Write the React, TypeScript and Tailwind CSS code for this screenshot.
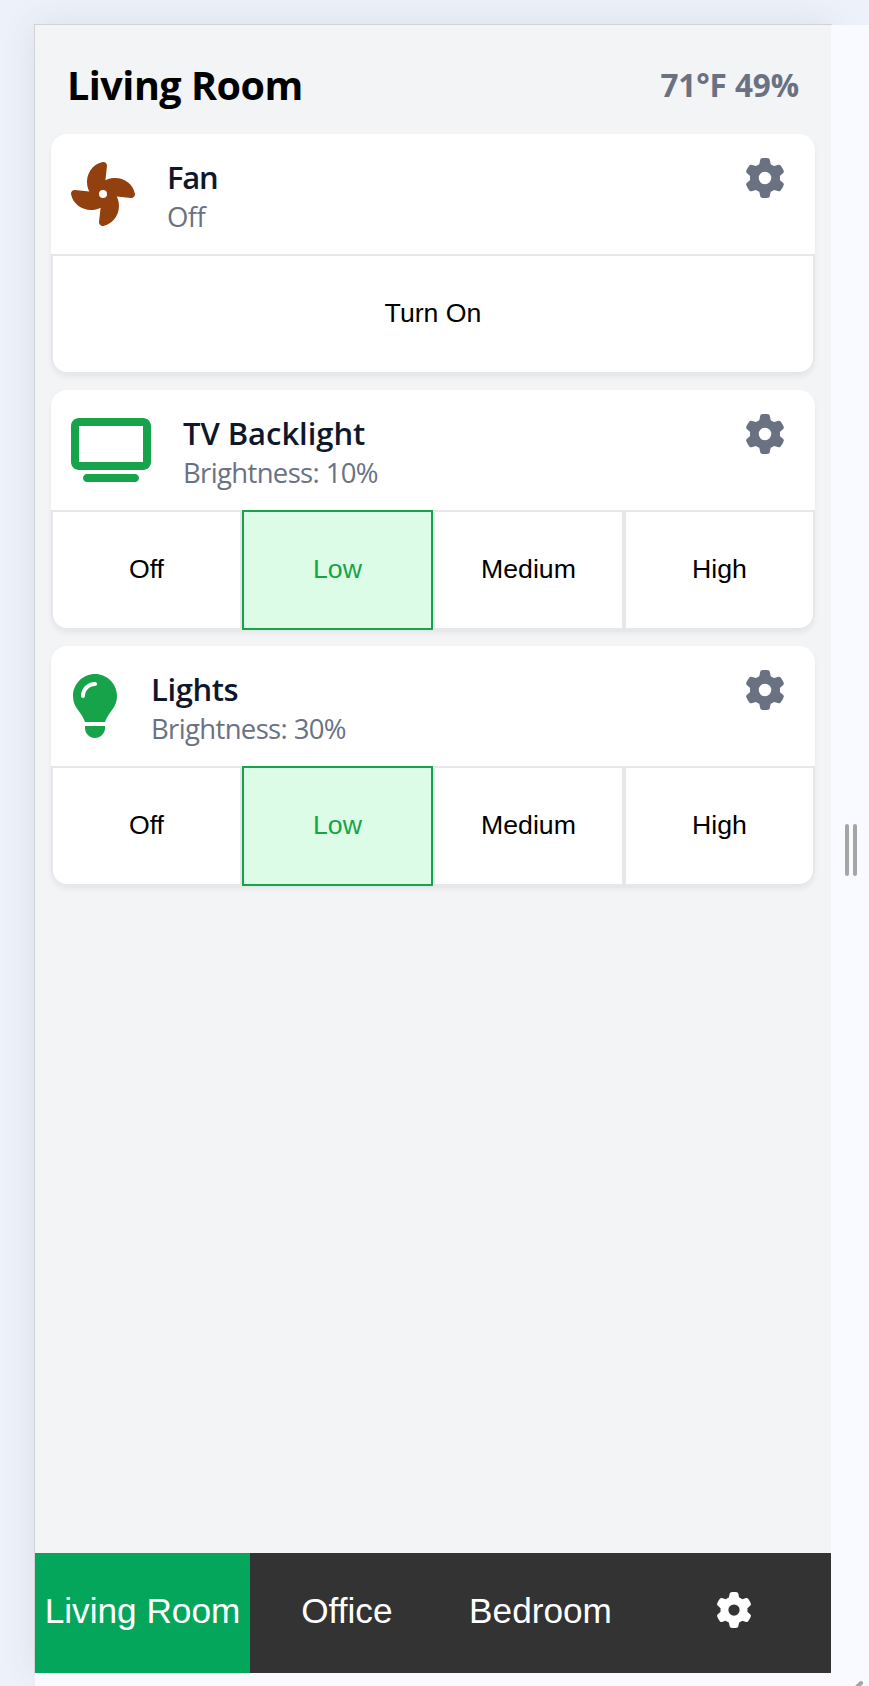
import type { ReactNode } from "react";
import { FaFan, FaGear, FaLightbulb, FaTv } from "react-icons/fa6";

type Option = { label: string; active?: boolean };

type DeviceProps = {
  icon: ReactNode;
  name: ReactNode;
  status: ReactNode;
  options: Option[];
};

function DeviceCard({ icon, name, status, options }: DeviceProps) {
  return (
    <section className="flex h-60 flex-col rounded-2xl bg-white shadow-[0_3px_6px_-1px_rgba(0,0,0,0.08)]">
      <div className="flex h-[120px] shrink-0 items-start pl-5 pr-[30px]">
        <div className="mt-7 shrink-0">{icon}</div>
        <div className="ml-8 mt-[23px] flex-1 whitespace-nowrap font-['Open_Sans',sans-serif]">
          <h2 className="h-10 text-[31px] font-semibold leading-10 text-slate-900">{name}</h2>
          <p className="h-10 text-[27.5px] leading-10 text-gray-500">{status}</p>
        </div>
        <button className="mt-6" aria-label="Settings">
          <FaGear className="size-10 text-gray-500" />
        </button>
      </div>
      <div className="flex h-[120px]">
        {options.map((option) => (
          <button
            key={option.label}
            className={
              option.active
                ? "flex-1 border-2 border-[#16a34a] bg-[#dcfce7] pb-0.5 text-[26.67px] text-[#16a34a]"
                : "flex-1 border-2 border-gray-200 pb-0.5 text-[26.67px] text-black first:rounded-bl-2xl last:rounded-br-2xl"
            }
          >
            {option.label}
          </button>
        ))}
      </div>
    </section>
  );
}

const levels: Option[] = [
  { label: "Off" },
  { label: "Low", active: true },
  { label: "Medium" },
  { label: "High" },
];

export default function App() {
  return (
    <div className="grid h-[1686px] w-[869px] overflow-hidden bg-[#edf2fa] pl-[34px] pt-6 font-['Liberation_Sans',Arial,sans-serif]">
      <div className="col-start-1 row-start-1 h-[1650px] w-[798px] border border-[#d0d2d5] shadow-[0_0_32px_rgba(60,64,67,0.1)]" />
      <div className="z-10 col-start-1 row-start-1 ml-px mt-px flex h-[1661px] bg-[#f9faff]">
        <main className="flex h-[1648px] w-[796px] shrink-0 flex-col bg-[#f3f4f6]">
          <header className="flex h-[109px] items-center justify-between whitespace-nowrap px-8 pt-2.5 font-['Open_Sans',sans-serif] font-bold">
            <h1 className="text-[39.5px] leading-[56px] tracking-[-0.5px] text-black">Living Room</h1>
            <span className="text-[31.5px] leading-[48px] tracking-[-0.1px] text-gray-500">71°F 49%</span>
          </header>
          <div className="flex flex-1 flex-col gap-4 px-4">
            <DeviceCard
              icon={<FaFan className="size-16 text-[#92400e]" />}
              name={<span className="tracking-[-1.2px]">Fan</span>}
              status={<span className="tracking-[-0.6px]">Off</span>}
              options={[{ label: "Turn On" }]}
            />
            <DeviceCard
              icon={<FaTv className="h-16 w-20 text-[#16a34a]" />}
              name={<span className="tracking-[-0.05px]">TV Backlight</span>}
              status={<span className="tracking-[-0.65px]">Brightness: 10%</span>}
              options={levels}
            />
            <DeviceCard
              icon={<FaLightbulb className="h-16 w-12 text-[#16a34a]" />}
              name={<span className="tracking-[-0.4px]">Lights</span>}
              status={<span className="tracking-[-0.65px]">Brightness: 30%</span>}
              options={levels}
            />
          </div>
          <nav className="flex h-[120px] shrink-0 bg-[#333333] text-[35.2px] text-white">
            <button className="w-[215px] shrink-0 whitespace-nowrap bg-[#04a65b] pb-[3px]">Living Room</button>
            <button className="flex-1 pb-[3px]">Office</button>
            <button className="flex-1 pb-[3px]">Bedroom</button>
            <button className="flex flex-1 items-center justify-center pb-1.5" aria-label="Settings">
              <FaGear className="size-9" />
            </button>
          </nav>
        </main>
        <aside className="flex flex-1 flex-col pt-[799px]">
          <div className="ml-3.5 flex h-[52px] w-3 justify-between">
            <span className="w-1 rounded-sm bg-[#a5a5a5]" />
            <span className="w-1 rounded-sm bg-[#a5a5a5]" />
          </div>
          <svg className="mt-auto ml-auto h-[6px] w-[16px]" viewBox="0 0 16 6" fill="none" stroke="#a5a5a5" strokeWidth="4" strokeLinecap="round">
            <path d="M8 3L0 11" />
          </svg>
        </aside>
      </div>
    </div>
  );
}
